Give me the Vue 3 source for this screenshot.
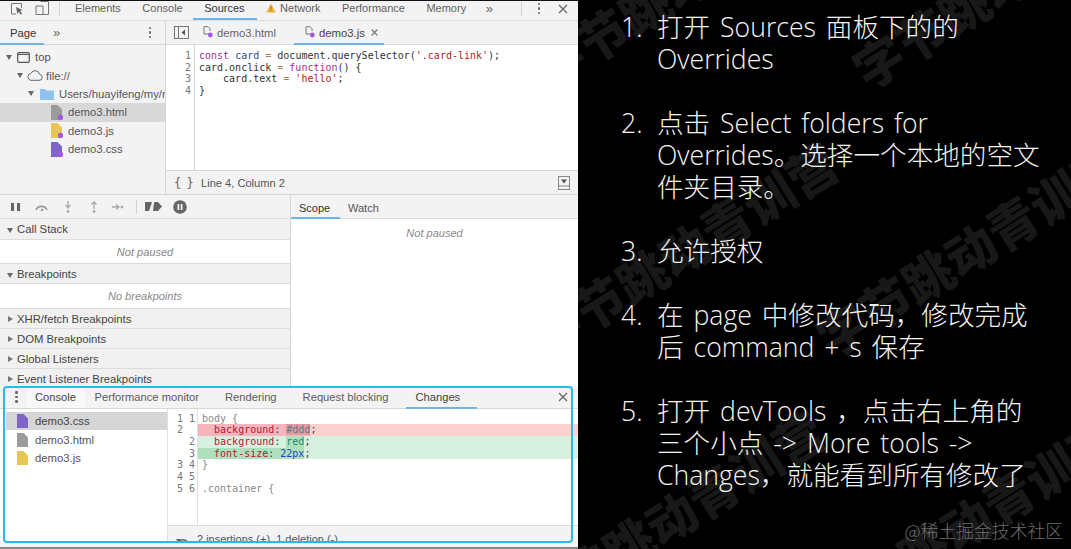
<script setup>
const mainTabs = ['Elements', 'Console', 'Sources']
const tailTabs = ['Performance', 'Memory']
const sections = [
  { name: 'Call Stack', open: true, note: 'Not paused' },
  { name: 'Breakpoints', open: true, note: 'No breakpoints' },
  { name: 'XHR/fetch Breakpoints' },
  { name: 'DOM Breakpoints' },
  { name: 'Global Listeners' },
  { name: 'Event Listener Breakpoints' }
]
const marks = [
  { x: 686, y: -20 }, { x: 1005, y: -20 },
  { x: 683, y: 248 }, { x: 969, y: 248 },
  { x: 670, y: 516 }, { x: 965, y: 522 }
]
const changed = [
  { n: 'demo3.css', c: '#7e66c9', on: true },
  { n: 'demo3.html', c: '#9b9b9b' },
  { n: 'demo3.js', c: '#e8c655' }
]
</script>

<template>
  <div class="page">
    <section class="dt">
      <header class="top">
        <svg class="ic-insp" width="14" height="14" viewBox="0 0 14 14"><path d="M6 12H1.500V1.500h10V6" fill="none" stroke="#777" stroke-width="1"/><path d="M6 5l6.500 3-2.600 1 2.300 2.700-1.300 1.100-2.200-2.700-1.400 2z" fill="#666"/></svg>
        <svg class="ic-dev" width="15" height="15" viewBox="0 0 15 15"><path d="M5.500 1.500h8v13h-6M1 6h7v8.500H1z" fill="none" stroke="#777" stroke-width="1"/></svg>
        <i class="vsep"></i>
        <nav class="mtabs">
          <span v-for="t in mainTabs" :key="t" :class="{ cur: t === 'Sources' }">{{ t }}</span>
          <span class="warn"><svg width="10" height="10" viewBox="0 0 10 10"><path d="M5 .5l4.800 9H.2z" fill="#f2b23a"/><path d="M4.600 3.500h.8v3h-.8zM4.600 7.200h.8v1h-.8z" fill="#555"/></svg>Network</span>
          <span v-for="t in tailTabs" :key="t">{{ t }}</span>
          <b class="more">»</b>
        </nav>
        <i class="vsep end"></i>
        <span class="kebab"><i></i><i></i><i></i></span>
        <svg class="close" width="10" height="10" viewBox="0 0 10 10"><path d="M1 1l8 8M9 1L1 9" stroke="#666" stroke-width="1.300"/></svg>
      </header>

      <div class="src">
        <aside class="nav">
          <div class="navtabs">
            <span class="page-tab">Page</span>
            <b class="more m2">»</b>
            <span class="kebab k2"><i></i><i></i><i></i></span>
          </div>
          <div class="tree">
            <div class="row r0"><i class="tri"></i><svg width="13" height="11" viewBox="0 0 13 11"><rect x=".7" y=".7" width="11.600" height="9.600" rx="1" fill="none" stroke="#555" stroke-width="1.200"/><path d="M1 2.500h11" stroke="#555"/></svg><span>top</span></div>
            <div class="row r1"><i class="tri"></i><svg width="17" height="11" viewBox="0 0 17 11"><path d="M4.500 10.300h8.500a3 3 0 0 0 .5-6 4.500 4.500 0 0 0-8.500-1A3.600 3.600 0 0 0 4.500 10.300z" fill="none" stroke="#666"/></svg><span>file://</span></div>
            <div class="row r2"><i class="tri"></i><svg width="14" height="12" viewBox="0 0 14 12"><path d="M0 1h5l1.500 1.500H14V12H0z" fill="#8fc3ef"/></svg><span>Users/huayifeng/my/n</span></div>
            <div class="row r3 sel"><svg class="fic" width="12" height="16" viewBox="0 0 12 16"><path d="M0 0h6.500L11 4.500V15H0z" fill="#9b9b9b"/><circle cx="9.500" cy="12.500" r="2.700" fill="#a855e0"/></svg><span>demo3.html</span></div>
            <div class="row r3"><svg class="fic" width="12" height="16" viewBox="0 0 12 16"><path d="M0 0h6.500L11 4.500V15H0z" fill="#e8c655"/><circle cx="9.500" cy="12.500" r="2.700" fill="#a855e0"/></svg><span>demo3.js</span></div>
            <div class="row r3"><svg class="fic" width="12" height="16" viewBox="0 0 12 16"><path d="M0 0h6.500L11 4.500V15H0z" fill="#7e66c9"/><circle cx="9.500" cy="12.500" r="2.700" fill="#a855e0"/></svg><span>demo3.css</span></div>
          </div>
        </aside>
        <div class="ed">
          <div class="edtabs">
            <svg class="tog" width="15" height="13" viewBox="0 0 15 13"><rect x=".5" y=".5" width="14" height="12" fill="none" stroke="#777"/><path d="M4.500 1v11" stroke="#777"/><path d="M11 3.500v6L7.500 6.500z" fill="#555"/></svg>
            <span class="ftab first"><svg width="10" height="12" viewBox="0 0 10 12"><path d="M5.500 8H1V.7h4L7 2.700V5" fill="none" stroke="#777"/><circle cx="7.300" cy="9" r="2.400" fill="#a855e0"/></svg>demo3.html</span>
            <span class="ftab act"><svg width="10" height="12" viewBox="0 0 10 12"><path d="M5.500 8H1V.7h4L7 2.700V5" fill="none" stroke="#777"/><circle cx="7.300" cy="9" r="2.400" fill="#a855e0"/></svg>demo3.js<svg class="tx" width="7" height="7" viewBox="0 0 7 7"><path d="M.5.500l6 6M6.500.5l-6 6" stroke="#777" stroke-width="1.100"/></svg></span>
          </div>
          <div class="code">
            <div class="gut"><div>1</div><div>2</div><div>3</div><div>4</div></div>
            <pre class="cm"><span class="kw">const</span> <span class="def">card</span> <span class="op">=</span> document.querySelector(<span class="str">'.card-link'</span>);
card.onclick <span class="op">=</span> <span class="kw">function</span>() {
    card.text <span class="op">=</span> <span class="str">'hello'</span>;
}</pre>
          </div>
          <div class="stat">
            <span class="brace">{ }</span>
            <span class="lc">Line 4, Column 2</span>
            <svg class="stic" width="12" height="14" viewBox="0 0 12 14"><rect x=".5" y=".5" width="11" height="13" fill="none" stroke="#888"/><path d="M1 10h10" stroke="#888"/><path d="M3 3.500h6L6 7.500z" fill="#555"/></svg>
          </div>
        </div>
      </div>

      <div class="dbg">
        <div class="dl">
          <div class="dbar">
            <svg width="9" height="8" viewBox="0 0 9 8"><path d="M0 0h3v8H0zM6 0h3v8H6z" fill="#666"/></svg>
            <svg width="16" height="8" viewBox="0 0 16 8"><path d="M2 7a6 6 0 0 1 11 0" fill="none" stroke="#999" stroke-width="1.600"/><circle cx="8" cy="7" r="1.300" fill="#999"/></svg>
            <svg width="8" height="12" viewBox="0 0 8 12"><path d="M4 0v6M1.500 4L4 7l2.500-3" fill="none" stroke="#aaa" stroke-width="1.300"/><circle cx="4" cy="10.500" r="1.400" fill="#aaa"/></svg>
            <svg class="so" width="8" height="12" viewBox="0 0 8 12"><path d="M4 8V1M1.500 3.500L4 .8l2.500 2.700" fill="none" stroke="#aaa" stroke-width="1.300"/><circle cx="4" cy="10.500" r="1.400" fill="#aaa"/></svg>
            <svg width="12" height="8" viewBox="0 0 12 8"><path d="M0 4h6M4 1.500L7 4 4 6.500" fill="none" stroke="#aaa" stroke-width="1.300"/><circle cx="10" cy="4" r="1.400" fill="#aaa"/></svg>
            <i class="vsep s3"></i>
            <svg width="17" height="13" viewBox="0 0 17 13"><path d="M0 2h7L4 11H0zM9 2h4l4 4.500-4 4.500H8z" fill="#666"/><path d="M9.500 0L4.500 13" stroke="#f3f3f3" stroke-width="1.300"/></svg>
            <svg class="pa" width="14" height="14" viewBox="0 0 14 14"><circle cx="7" cy="7" r="6.800" fill="#666"/><path d="M4.500 4h1.800v6H4.500zM7.700 4h1.800v6H7.700z" fill="#eee"/></svg>
          </div>
          <template v-for="s in sections" :key="s.name">
            <div class="shead" :class="{ o: s.open }"><i class="st"></i>{{ s.name }}</div>
            <div v-if="s.note" class="snote">{{ s.note }}</div>
          </template>
        </div>
        <div class="dr">
          <div class="scope"><span class="sc on">Scope</span><span class="sc">Watch</span></div>
          <div class="np">Not paused</div>
        </div>
      </div>

      <div class="drawer">
        <div class="dtabs">
          <span class="kebab k3"><i></i><i></i><i></i></span>
          <span class="con">Console</span>
          <span class="pm">Performance monitor</span>
          <span class="ren">Rendering</span>
          <span class="rb">Request blocking</span>
          <span class="chg">Changes<svg width="7" height="7" viewBox="0 0 7 7"><path d="M.5.500l6 6M6.500.5l-6 6" stroke="#777" stroke-width="1.100"/></svg></span>
          <svg class="dclose" width="10" height="10" viewBox="0 0 10 10"><path d="M1 1l8 8M9 1L1 9" stroke="#666" stroke-width="1.300"/></svg>
        </div>
        <div class="dbody">
          <div class="flist">
            <div v-for="f in changed" :key="f.n" class="fl" :class="{ on: f.on }">
              <svg width="11" height="14" viewBox="0 0 11 14"><path d="M0 0h6.500L11 4.500V14H0z" :fill="f.c"/></svg>
              <span>{{ f.n }}</span>
            </div>
          </div>
          <div class="diff">
            <div class="dcode">
              <div class="dl0"><span class="ln">1 1</span><span class="ctx">body {</span></div>
              <div class="dl0 del"><span class="ln">2&nbsp;&nbsp;</span><span class="tx2"><mark class="md">&nbsp;&nbsp;<b class="prop">background</b>: <b class="hex">#ddd</b></mark>;</span></div>
              <div class="dl0 add"><span class="ln">&nbsp;&nbsp;2</span><span class="tx2"><span class="pl">&nbsp;&nbsp;<b class="prop">background</b>: </span><mark class="mv"><b class="val">red</b></mark>;</span></div>
              <div class="dl0 add"><span class="ln">&nbsp;&nbsp;3</span><span class="tx2"><mark class="ma">&nbsp;&nbsp;<b class="prop">font-size</b>: <b class="num">22px</b></mark>;</span></div>
              <div class="dl0"><span class="ln">3 4</span><span class="ctx">}</span></div>
              <div class="dl0"><span class="ln">4 5</span><span class="ctx"></span></div>
              <div class="dl0"><span class="ln">5 6</span><span class="ctx">.container {</span></div>
            </div>
            <div class="dstat"><svg width="14" height="8" viewBox="0 0 14 8"><path d="M2 7a5.500 5.500 0 0 1 10 0" fill="none" stroke="#666" stroke-width="1.500"/><path d="M0 3l3 4.500L5 3z" fill="#666"/></svg><span>2 insertions (+), 1 deletion (-)</span></div>
          </div>
        </div>
        <div class="dfoot"></div>
        <div class="hl"></div>
      </div>
    </section>

    <section class="slide">
      <div class="wm">
        <span v-for="(m, i) in marks" :key="i" :style="{ left: m.x - 578 + 'px', top: m.y + 'px' }">字节跳动青训营</span>
      </div>
      <ol class="steps">
        <li><i>1.</i><p>打开 Sources 面板下的的<br>Overrides</p></li>
        <li><i>2.</i><p>点击 Select folders for<br>Overrides。选择一个本地的空文<br>件夹目录。</p></li>
        <li><i>3.</i><p>允许授权</p></li>
        <li><i>4.</i><p>在 page 中修改代码，修改完成<br>后 command + s 保存</p></li>
        <li><i>5.</i><p>打开 devTools ，点击右上角的<br>三个小点 -&gt; More tools -&gt;<br>Changes，就能看到所有修改了</p></li>
      </ol>
      <div class="jj">@稀土掘金技术社区</div>
    </section>
  </div>
</template>

<style>
html, body { margin: 0; background: #000; overflow: hidden; }
</style>

<style scoped>
.page { width: 1071px; height: 549px; display: flex; background: #000; overflow: hidden; font-family: "Liberation Sans", Arial, sans-serif; }
i { font-style: normal; }
.dt { width: 578px; height: 549px; flex: none; display: flex; flex-direction: column; background: #f3f3f3; color: #555; font-size: 11px; border-top: 1px solid #111; box-sizing: border-box; position: relative; overflow: hidden; }

.top { height: 20px; flex: none; box-sizing: border-box; padding: 0 10px 4px 10px; display: flex; align-items: center; background: #f3f3f3; border-bottom: 1px solid #dcdcdc; position: relative; }
.ic-dev { margin-left: 11px; margin-top: -2px; }
.vsep { display: block; width: 1px; height: 14px; background: #d2d2d2; margin-left: 9px; }
.mtabs { display: flex; align-items: center; gap: 21.500px; margin-left: 15px; height: 100%; color: #5e5e5e; font-size: 11px; }
.mtabs span { position: relative; line-height: 17px; white-space: nowrap; }
.mtabs .cur { color: #333; }
.mtabs .cur::after { content: ""; position: absolute; left: -11px; right: -12px; top: 18px; height: 2px; background: #6fb4e8; }
.warn svg { margin-right: 4px; vertical-align: -1px; }
.more { font-weight: 400; font-size: 13px; color: #666; margin-left: -2px; }
.vsep.end { margin-left: auto; }
.kebab { display: flex; flex-direction: column; gap: 2px; }
.kebab i { display: block; width: 2.500px; height: 2.500px; border-radius: 50%; background: #666; }
.top .kebab { margin-left: 16px; }
.close { margin-left: 18px; }

.src { height: 174px; flex: none; box-sizing: border-box; display: flex; border-bottom: 1px solid #d6d6d6; }
.nav { width: 165px; flex: none; border-right: 1px solid #d6d6d6; overflow: hidden; }
.navtabs { height: 24px; box-sizing: border-box; display: flex; align-items: center; border-bottom: 1px solid #d8d8d8; position: relative; }
.page-tab { width: 44px; padding-left: 10px; box-sizing: border-box; height: 24px; line-height: 24px; font-size: 11.300px; color: #333; border-bottom: 2px solid #6fb4e8; margin-bottom: -1px; }
.m2 { margin-left: 9px; }
.k2 { margin-left: auto; margin-right: 14px; }
.tree { padding-top: 3px; }
.row { height: 18.400px; display: flex; align-items: center; white-space: nowrap; font-size: 11.300px; color: #555; }
.row svg { flex: none; margin-right: 5px; }
.tri { width: 0; height: 0; border: 3px solid transparent; border-top: 5px solid #666; border-bottom: 0; margin-right: 5px; flex: none; }
.r0 { padding-left: 6px; }
.r1 { padding-left: 17px; }
.r1 .tri { margin-right: 3px; }
.r1 svg { margin-right: 3px; }
.r2 { padding-left: 28px; }
.r2 .tri { margin-right: 6px; }
.r2 svg { margin-right: 5px; }
.r3 { padding-left: 51px; }
.r3 svg { margin-right: 5px; margin-top: 1px; }
.sel { background: #d9d9d9; }

.ed { flex: 1; display: flex; flex-direction: column; min-width: 0; }
.edtabs { height: 24px; box-sizing: border-box; flex: none; display: flex; align-items: center; border-bottom: 1px solid #d8d8d8; font-size: 11.300px; color: #666; position: relative; }
.tog { margin-left: 8px; }
.ftab { display: flex; align-items: center; height: 24px; white-space: nowrap; }
.ftab svg:first-child { margin-right: 4px; margin-top: -2px; }
.first { margin-left: 14px; }
.act { margin-left: 29px; position: relative; color: #444; }
.act::after { content: ""; position: absolute; left: -11px; right: -6px; bottom: 0; height: 2px; background: #6fb4e8; }
.tx { margin-left: 6px; margin-top: -1px; }
.code { flex: 1; display: flex; background: #fff; min-height: 0; }
.gut { width: 29px; flex: none; box-sizing: border-box; border-right: 1px solid #d2d2d2; padding: 5px 3px 0 0; text-align: right; font: 10px/11.700px "DejaVu Sans Mono", monospace; color: #777; }
.cm { margin: 0; padding: 5px 0 0 4px; font: 10px/11.700px "DejaVu Sans Mono", monospace; color: #333; }
.kw { color: #a0328c; }
.def { color: #2b4a99; }
.op { color: #a67f59; }
.str { color: #b22222; }
.stat { height: 24px; flex: none; box-sizing: border-box; display: flex; align-items: center; border-top: 1px solid #d8d8d8; background: #f3f3f3; }
.brace { margin-left: 8px; width: 27px; font: 400 12px "DejaVu Sans Mono", monospace; letter-spacing: -1px; color: #666; white-space: nowrap; }
.lc { font-size: 11.100px; color: #555; }
.stic { margin-left: auto; margin-right: 8px; }

.dbg { height: 191px; flex: none; display: flex; }
.dl { width: 291px; flex: none; border-right: 1px solid #d8d8d8; box-sizing: border-box; overflow: hidden; }
.dbar { height: 24px; display: flex; align-items: center; padding-left: 11px; gap: 14px; border-bottom: 1px solid #e0e0e0; box-sizing: border-box; }
.so { margin-left: 4px; }
.vsep.s3 { margin: 0 -6px 0 -2px; }
.pa { margin-left: -3px; }
.shead { height: 20px; line-height: 20px; background: #f1f1f1; border-bottom: 1px solid #dcdcdc; box-sizing: border-box; padding-left: 17px; position: relative; color: #444; font-size: 11.300px; white-space: nowrap; }
.shead.o { height: 20.500px; }
.st { position: absolute; left: 8px; top: 7px; border: 3px solid transparent; border-left: 5px solid #777; border-right: 0; }
.o .st { left: 7px; top: 9px; border: 3px solid transparent; border-top: 5px solid #666; border-bottom: 0; }
.snote { height: 24.300px; line-height: 24px; background: #fff; border-bottom: 1px solid #dcdcdc; box-sizing: border-box; text-align: center; font-style: italic; color: #888; }
.dr { flex: 1; background: #fff; }
.scope { height: 24px; background: #f3f3f3; border-bottom: 1px solid #d8d8d8; box-sizing: border-box; display: flex; position: relative; }
.sc { line-height: 26px; padding: 0 8px; color: #555; }
.sc.on { color: #333; width: 49px; box-sizing: border-box; border-bottom: 2px solid #6fb4e8; height: 24px; }
.np { text-align: center; font-style: italic; color: #888; margin-top: 8px; line-height: 13px; }

.drawer { flex: 1; min-height: 0; position: relative; display: flex; flex-direction: column; background: #fff; }
.dtabs { height: 23px; flex: none; display: flex; align-items: center; background: #f3f3f3; border-bottom: 1px solid #d8d8d8; box-sizing: border-box; font-size: 11.200px; color: #5c5c5c; white-space: nowrap; }
.k3 { margin-left: 15px; }
.con { margin-left: 9px; width: 58px; height: 22px; line-height: 22px; text-align: center; background: #f8f8f8; color: #444; }
.pm { margin-left: 10px; }
.ren { margin-left: 26px; }
.rb { margin-left: 26px; }
.chg { margin-left: 27px; width: 46px; color: #444; position: relative; height: 22px; line-height: 22px; display: flex; align-items: center; gap: 7px; flex: none; }
.chg::after { content: ""; position: absolute; left: -9px; width: 71px; bottom: -1px; height: 2px; background: #6fb4e8; }
.dclose { margin-left: auto; margin-right: 10px; }
.dbody { flex: 1; min-height: 0; display: flex; overflow: hidden; }
.flist { width: 168px; flex: none; border-right: 1px solid #e0e0e0; box-sizing: border-box; padding: 3px 0 0 6px; }
.fl { height: 18.400px; display: flex; align-items: center; gap: 7px; padding-left: 11px; font-size: 11.300px; color: #555; }
.fl.on { background: #d6d6d6; color: #444; }
.diff { flex: 1; min-width: 0; display: flex; flex-direction: column; position: relative; }
.dcode { flex: 1; padding-top: 3.500px; position: relative; min-height: 0; font: 10px/11.700px "DejaVu Sans Mono", monospace; }
.dcode::before { content: ""; position: absolute; left: 29px; top: 0; bottom: 0; width: 1px; background: #e0e0e0; }
.dl0 { height: 11.700px; display: flex; white-space: pre; position: relative; }
.ln { width: 27px; text-align: right; color: #777; flex: none; }
.ctx { padding-left: 7px; color: #888; }
.tx2 { padding-left: 3px; color: #444; }
.del { background: linear-gradient(to right, transparent 30px, #fdd0d0 30px); }
.add { background: linear-gradient(to right, transparent 30px, #d8f0df 30px); }
mark { color: inherit; display: inline-block; height: 11.700px; }
.md, .ma { padding-left: 4px; }
.pl { padding-left: 4px; }
.md { background: #f8b4bc; }
.ma, .mv { background: #aee0bd; }
mark b, .pl b { font-weight: 400; }
.prop { color: #b5182c; }
.hex { color: #5c7c8a; background: #e59aa0; }
.val { color: #1f8a70; }
.num { color: #1f3fc4; }
.dstat { height: 17px; flex: none; box-sizing: border-box; background: #f3f3f3; border-top: 1px solid #dcdcdc; display: flex; align-items: flex-start; overflow: hidden; color: #555; }
.dstat svg { margin: 10px 0 0 8px; }
.dstat span { margin: 7px 0 0 7px; line-height: 13px; white-space: nowrap; }
.dfoot { height: 5px; flex: none; background: #f3f3f3; border-bottom: 2px solid #888; }
.hl { position: absolute; left: 3px; top: 0; width: 570px; height: 157px; border: 2px solid #2cb8e8; border-radius: 4px; box-sizing: border-box; pointer-events: none; }

.slide { flex: 1; position: relative; overflow: hidden; background: #000; }
.wm span { position: absolute; transform: translate(-50%, -50%) rotate(-32deg); font: 900 50px/1 "Noto Sans CJK SC", sans-serif; color: #181818; white-space: nowrap; }
.steps { position: relative; list-style: none; margin: 0; padding: 11px 0 0 43px; display: flex; flex-direction: column; gap: 32px; color: #f4f4f4; font: 300 26.600px/32px "Open Sans", "Noto Sans CJK SC", sans-serif; }
.steps li { display: flex; }
.steps i { width: 36px; flex: none; }
.steps p { margin: 0; white-space: nowrap; word-spacing: 3px; }
.jj { position: absolute; right: 8px; top: 519px; font: 300 17.800px/22px "Noto Sans CJK SC", sans-serif; color: #6e6e6e; white-space: nowrap; }
</style>
